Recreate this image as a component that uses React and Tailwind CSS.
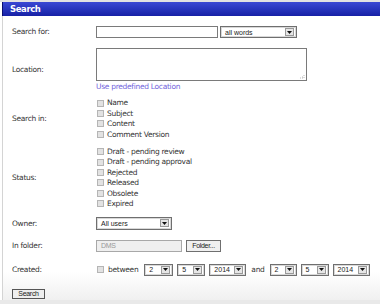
import React from 'react';

const label = "w-[93px] pl-[9px] flex items-center text-[#333] text-[7.5px]";

function Arrow() {
    return (
        <span className="w-[9px] h-[8px] mr-[2px] flex items-center justify-center bg-[#e6e6e6] border border-[#9a9a9a]">
            <svg width="5" height="3" viewBox="0 0 5 3"><path d="M0 0h5L2.5 3z" fill="#111" /></svg>
        </span>
    );
}

function Select({ value, w }) {
    return (
        <div className={`${w} h-full flex items-center justify-between bg-white border border-[#6f6f6f] shadow-[inset_0_0_0_1px_#d8d8d8]`}>
            <span className="pl-[4px] text-[7px] tracking-normal text-[#222] font-['Liberation_Sans',sans-serif]">{value}</span>
            <Arrow />
        </div>
    );
}

function Check({ text }) {
    return (
        <label className="h-[10.4px] flex items-center gap-[3px]">
            <input type="checkbox" className="appearance-none ml-[1px] w-[7px] h-[7px] bg-[#e2e2e2] border border-[#b5b5b5]" />
            <span className="text-[7.5px] text-[#333]">{text}</span>
        </label>
    );
}

export default function App() {
    return (
        <div className="w-[380px] h-[304px] bg-white overflow-hidden flex flex-col leading-none font-['DejaVu_Sans',sans-serif] tracking-[-0.3px]">
            <div className="h-[2px] shrink-0 bg-[#e2e2e2]"></div>
            <div className="ml-[2px] h-[14px] shrink-0 flex items-center pl-[7px] bg-gradient-to-b from-[#3a48d4] to-[#1720a6] border-l border-[#0a0f70]">
                <span className="text-white font-bold text-[8.5px] tracking-[-0.4px]">Search</span>
            </div>
            <div className="ml-[2px] flex-1 flex flex-col border-l border-[#d4d4d4] pt-[10px] bg-gradient-to-b from-white from-[90%] to-[#f0f0f0]">
                <div className="flex h-[12px]">
                    <div className={label}>Search for:</div>
                    <input type="text" className="w-[122px] h-full border border-[#7a7a7a] bg-white" />
                    <div className="ml-[2px] h-full"><Select value="all words" w="w-[77px]" /></div>
                </div>

                <div className="flex mt-[10px]">
                    <div className={label}>Location:</div>
                    <div className="flex flex-col">
                        <div className="relative w-[211px] h-[33px] border border-[#7a7a7a] bg-white">
                            <svg className="absolute right-[1px] bottom-[1px]" width="5" height="5" viewBox="0 0 5 5">
                                <path d="M4 1v1M2 3h1M4 3v1M0 4h1M2 4h1" stroke="#bbb" strokeWidth="1" />
                            </svg>
                        </div>
                        <a href="#" className="mt-[2px] h-[8px] leading-[8px] text-[7.5px] text-[#7265dc]">Use predefined Location</a>
                    </div>
                </div>

                <div className="flex mt-[7px]">
                    <div className={label}>Search in:</div>
                    <div className="flex flex-col">
                        <Check text="Name" />
                        <Check text="Subject" />
                        <Check text="Content" />
                        <Check text="Comment Version" />
                    </div>
                </div>

                <div className="flex mt-[7px]">
                    <div className={label}>Status:</div>
                    <div className="flex flex-col">
                        <Check text="Draft - pending review" />
                        <Check text="Draft - pending approval" />
                        <Check text="Rejected" />
                        <Check text="Released" />
                        <Check text="Obsolete" />
                        <Check text="Expired" />
                    </div>
                </div>

                <div className="flex h-[13px] mt-[8px]">
                    <div className={label}>Owner:</div>
                    <Select value="All users" w="w-[76px]" />
                </div>

                <div className="flex h-[12px] mt-[10px]">
                    <div className={label}>In folder:</div>
                    <input type="text" readOnly value="DMS" className="w-[86px] h-full pl-[4px] text-[7px] text-[#999] bg-[#efefef] border border-[#a8a8a8] font-['Liberation_Sans',sans-serif]" />
                    <button className="ml-[4px] w-[35px] h-full text-[7px] text-[#222] bg-[#f0f0f0] border border-[#6f6f6f] font-['Liberation_Sans',sans-serif]">Folder...</button>
                </div>

                <div className="flex h-[12px] mt-[12px]">
                    <div className={label}>Created:</div>
                    <div className="flex items-center h-full">
                        <input type="checkbox" className="appearance-none ml-[1px] w-[7px] h-[7px] bg-[#e2e2e2] border border-[#b5b5b5]" />
                        <span className="ml-[4px] text-[7.5px] text-[#333]">between</span>
                        <div className="ml-[6px] h-full flex gap-[4px]">
                            <Select value="2" w="w-[29px]" />
                            <Select value="5" w="w-[28px]" />
                            <Select value="2014" w="w-[37px]" />
                        </div>
                        <span className="mx-[5px] text-[7.5px] text-[#333]">and</span>
                        <div className="h-full flex gap-[4px]">
                            <Select value="2" w="w-[27px]" />
                            <Select value="5" w="w-[28px]" />
                            <Select value="2014" w="w-[37px]" />
                        </div>
                    </div>
                </div>

                <div className="flex mt-[13px] pl-[9px]">
                    <button className="w-[33px] h-[10px] text-[7px] text-[#222] bg-[#eeeeee] border border-[#555] font-['Liberation_Sans',sans-serif]">Search</button>
                </div>
            </div>
            <div className="h-[4px] shrink-0 bg-[#e9e9e9]"></div>
        </div>
    );
}
